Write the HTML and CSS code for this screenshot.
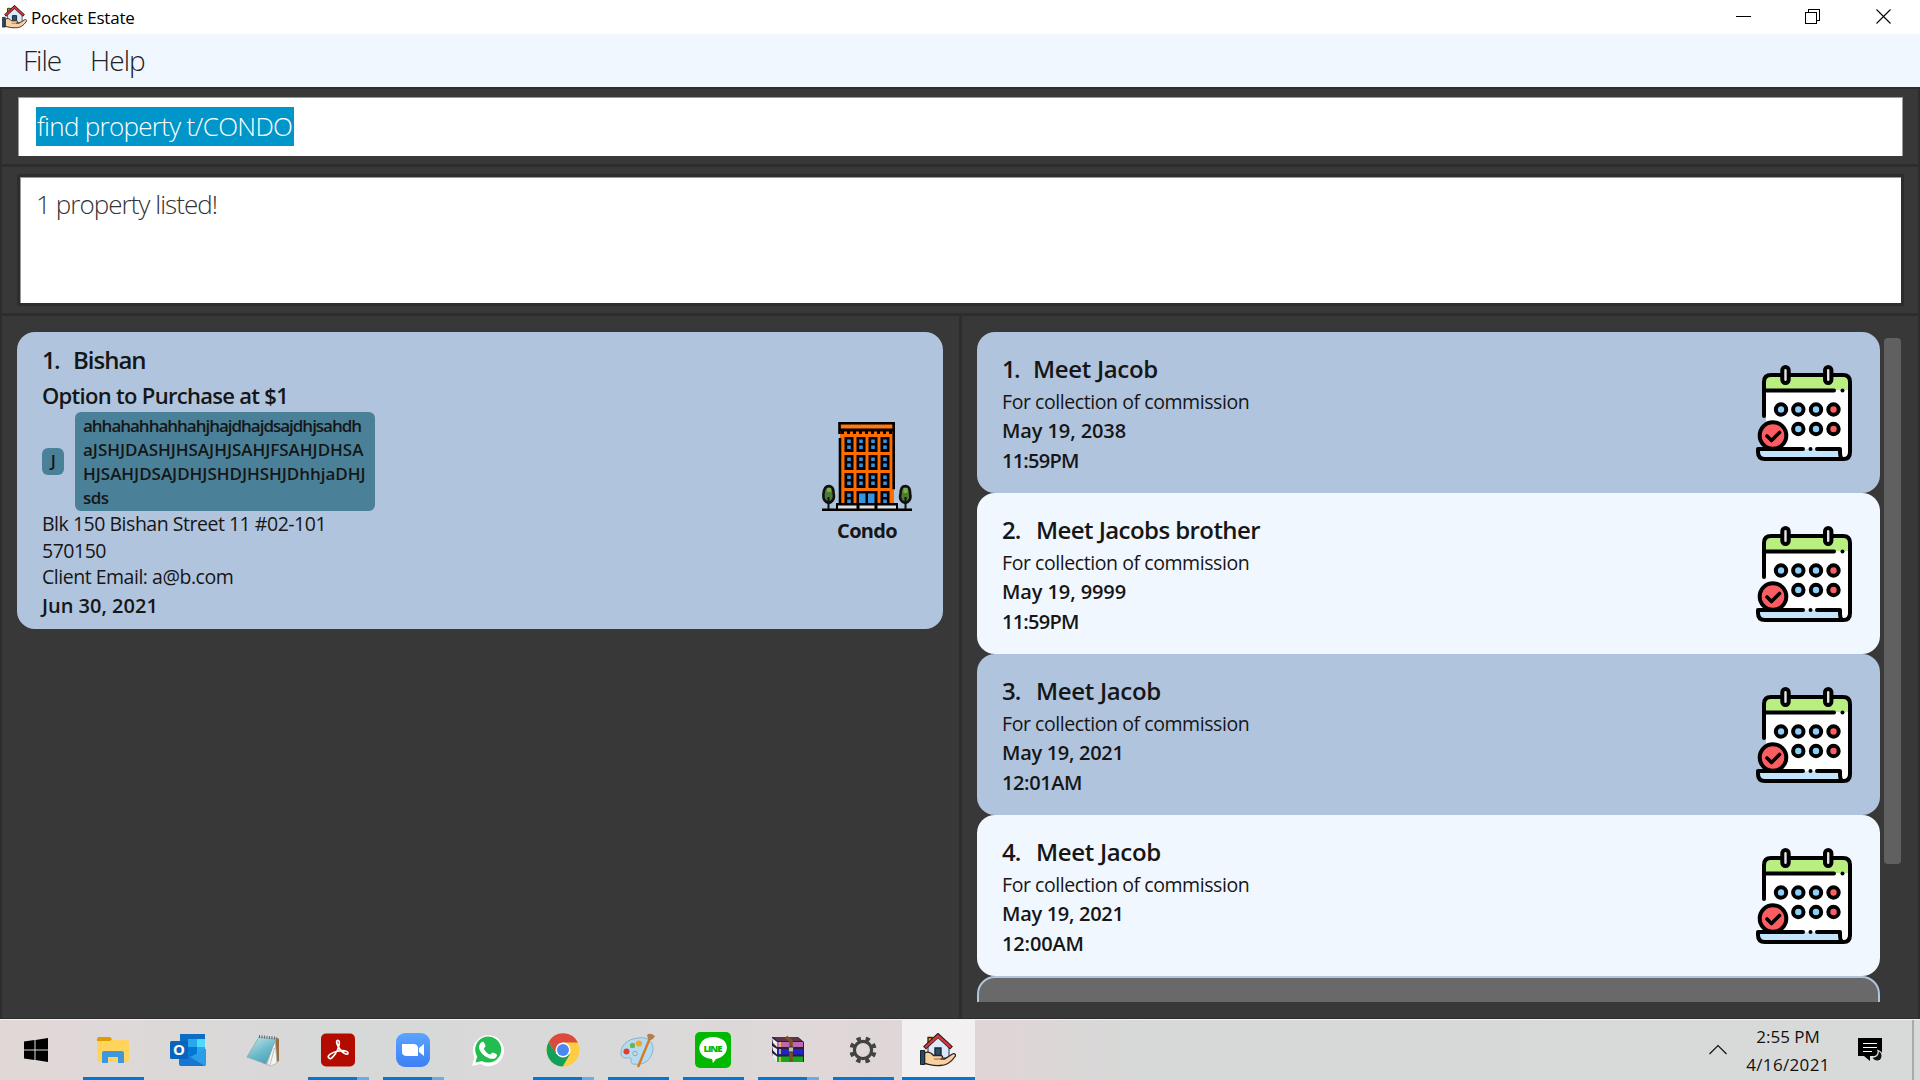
FILE: index.html
```html
<!DOCTYPE html>
<html lang="en">
<head>
<meta charset="utf-8">
<title>Pocket Estate</title>
<link rel="stylesheet" href="styles.css">
</head>
<body>
<svg class="defs" width="0" height="0">
  <symbol id="house" viewBox="0 0 36 34">
    <path d="M8 4.500h4v6H8z" fill="#f90" stroke="#2b2420" stroke-width="1.300"/>
    <path d="M8 13L18 4l11 9v12H8z" fill="#dbe9fa" stroke="#233040" stroke-width="1"/>
    <path d="M15 15h6v10h-6z" fill="#2d5068" stroke="#182733" stroke-width="1.400"/>
    <path d="M4.500 15L18 2.500l13.500 12.500" fill="none" stroke="#291818" stroke-width="4.200"/>
    <path d="M5.200 14.300L18 2.900l12.800 11.400" fill="none" stroke="#d63840" stroke-width="2.400"/>
    <path d="M4.500 20c4-2 7 0 9 2.500h7c3 0 2.500 3.500 0 3.500h4l8-5c2.500-1 4 1 2.500 2.500-4 6-9 9-15 9-6 .5-10-1-15.500-2z" fill="#fbd0a0" stroke="#2b2420" stroke-width="1.300"/>
    <path d="M14 26h9" stroke="#8a684c" stroke-width="1"/>
    <path d="M.5 17.500h4.200v14H.5z" fill="#264a60" stroke="#14222c"/>
  </symbol>
  <symbol id="calendar" viewBox="0 0 96 96">
    <path d="M8 50V17q0-7 7-7h72q7 0 7 7v70q0 7-6 7H10V50z" fill="#fff"/>
    <path d="M9 25v-8q0-7 7-7h71q7 0 7 7v8z" fill="#b9ef80"/>
    <path d="M2 84h82v10H8q-6-1-6-10z" fill="#c3e5fb"/>
    <path d="M8 51V17q0-7 7-7h72q7 0 7 7v70q0 7-6.500 7Q84 94 84 87v-3H61M47 84H2v3q0 7 7 7h79M9 25.500h69" fill="none" stroke="#000" stroke-width="4" stroke-linejoin="round" stroke-linecap="round"/>
    <circle cx="86.500" cy="25.500" r="2"/><circle cx="54.500" cy="84" r="2"/>
    <g fill="#e5e5e5" stroke="#000" stroke-width="4"><rect x="26.300" y="2" width="6.400" height="16" rx="3.200"/><rect x="69" y="2" width="6.400" height="16" rx="3.200"/></g>
    <g fill="#8dcffb" stroke="#000" stroke-width="4"><circle cx="25" cy="44.500" r="5.200"/><circle cx="42.300" cy="44.500" r="5.200"/><circle cx="60" cy="44.500" r="5.200"/><circle cx="42.300" cy="64" r="5.200"/><circle cx="60" cy="64" r="5.200"/></g>
    <g fill="#fc5d60" stroke="#000" stroke-width="4"><circle cx="77.500" cy="44.500" r="5.200"/><circle cx="77.500" cy="64" r="5.200"/><circle cx="17" cy="70.500" r="13.300"/></g>
    <path d="M11 71l4.500 4.500 8-8" fill="none" stroke="#000" stroke-width="3.600" stroke-linecap="round" stroke-linejoin="round"/>
  </symbol>
</svg>

<header class="titlebar">
  <svg class="app-icon" width="25" height="24"><use href="#house"/></svg>
  <span class="app-name">Pocket Estate</span>
  <div class="window-controls">
    <svg width="15" height="15" shape-rendering="crispEdges"><path d="M0 7.500h15" stroke="#000"/></svg>
    <svg class="restore" width="15" height="15" shape-rendering="crispEdges"><path d="M.5 3.500h11v11H.5zM3.500 3V.5h11v11H12" fill="none" stroke="#000"/></svg>
    <svg width="15" height="15"><path d="M.5.5l14 14M14.500.5l-14 14" stroke="#000" stroke-width="1.100"/></svg>
  </div>
</header>

<nav class="menubar"><span>File</span><span>Help</span></nav>

<section class="pane command-pane">
  <div class="command-box"><span class="selection">find property t/CONDO</span></div>
</section>
<section class="pane result-pane">
  <div class="result-box"><span class="result-text">1 property listed!</span></div>
</section>

<main class="lists">
  <section class="list property-list">
    <article class="property-card">
      <div class="property-info">
        <h2 class="card-title property-name"><span class="index">1.</span><span>Bishan</span></h2>
        <p class="option">Option to Purchase at $1</p>
        <div class="tags">
          <span class="tag tag-short">J</span>
          <span class="tag tag-long"><span class="tag-lower">ahhahahhahhahjhajdhajdsajdhjsahdh</span><br><span class="tag-upper">aJSHJDASHJHSAJHJSAHJFSAHJDHSA</span><br><span class="tag-upper">HJSAHJDSAJDHJSHDJHSHJDhhjaDHJ</span><br><span>sds</span></span>
        </div>
        <p class="detail">Blk 150 Bishan Street 11 #02-101</p>
        <p class="detail">570150</p>
        <p class="detail">Client Email: a@b.com</p>
        <p class="strong deadline">Jun 30, 2021</p>
      </div>
      <div class="property-type">
        <svg width="90" height="90" viewBox="0 0 90 90">
          <path d="M18 2h54v82H18z" fill="#ff6d00"/>
          <path d="M17.500 12V1.300h54.200v66M18 16v68" fill="none" stroke="#000" stroke-width="2.600"/>
          <path d="M17 8h55" stroke="#000" stroke-width="3"/>
          <path d="M19 4.500h51" stroke="#ff7a14" stroke-width="2.800"/>
          <path d="M19 10.500h53" stroke="#000" stroke-width="3" stroke-dasharray="3 3"/>
          <path d="M22.500 15h9v15h-9zM34.500 15h9v15h-9zM46.500 15h9v15h-9zM58.500 15h9v15h-9zM22.500 33h9v15h-9zM34.500 33h9v15h-9zM46.500 33h9v15h-9zM58.500 33h9v15h-9zM22.500 51h9v15h-9zM34.500 51h9v15h-9zM46.500 51h9v15h-9zM58.500 51h9v15h-9zM22.500 69h9v14h-9zM58.500 69h9v14h-9zM34.500 69h21v14h-21z"/>
          <path stroke="#3893df" stroke-width="3.600" stroke-dasharray="3.600 2.400" d="M27 17.500v10M39 17.500v10M51 17.500v10M63 17.500v10M27 35.500v10M39 35.500v10M51 35.500v10M63 35.500v10M27 53.500v10M39 53.500v10M51 53.500v10M63 53.500v10M27 71.500v10M63 71.500v10"/>
          <path d="M37 71.500h6.500V81H37zM46 71.500h6.500V81H46z" fill="#3893df"/>
          <path d="M14 81h62v7H14zM0 86.500h90v2.500H0z"/>
          <path d="M16 83.500h18.500v3H16zM37.500 83.500h15v3h-15zM55.500 83.500H74v3H55.500z" fill="#e0e0e0"/>
          <path d="M7 64q5 1 4.500 7 2 8-5 10-6-2-5-9Q2 64 7 64zM83.500 64q5 1 4.500 7 2 8-4.500 10-7-2-5-9 0-8 5-8z" fill="#4f7a36" stroke="#111" stroke-width="2.600"/>
          <path d="M7 66v4M83.500 66v5" stroke="#7cae45" stroke-width="4"/>
          <path d="M6.500 75v12M83.500 75v12" stroke="#111" stroke-width="2"/>
        </svg>
        <span class="type-name">Condo</span>
      </div>
    </article>
  </section>

  <section class="list appointment-list">
    <div class="appointments">
      <article class="appointment">
        <div><h2 class="card-title"><span class="index">1.</span><span>Meet Jacob</span></h2><p class="detail remark">For collection of commission</p><p class="strong date">May 19, 2038</p><p class="strong time narrow">11:59PM</p></div>
        <svg width="96" height="96"><use href="#calendar"/></svg>
      </article>
      <article class="appointment even">
        <div><h2 class="card-title long-title"><span class="index wide">2.</span><span>Meet Jacobs brother</span></h2><p class="detail remark">For collection of commission</p><p class="strong date">May 19, 9999</p><p class="strong time narrow">11:59PM</p></div>
        <svg width="96" height="96"><use href="#calendar"/></svg>
      </article>
      <article class="appointment">
        <div><h2 class="card-title"><span class="index wide">3.</span><span>Meet Jacob</span></h2><p class="detail remark">For collection of commission</p><p class="strong date-mid">May 19, 2021</p><p class="strong time">12:01AM</p></div>
        <svg width="96" height="96"><use href="#calendar"/></svg>
      </article>
      <article class="appointment even">
        <div><h2 class="card-title"><span class="index wide">4.</span><span>Meet Jacob</span></h2><p class="detail remark">For collection of commission</p><p class="strong date-mid">May 19, 2021</p><p class="strong time wide-time">12:00AM</p></div>
        <svg width="96" height="96"><use href="#calendar"/></svg>
      </article>
      <div class="appointment-partial"></div>
    </div>
    <div class="scrollbar"></div>
  </section>
</main>

<footer class="taskbar">
  <div class="task start"><svg width="24" height="24"><path d="M0 3.500l10.500-1.400v9.400H0zM11.500 2L24 0v11.500H11.500zM0 12.500h10.500v9.400L0 20.500zM11.500 12.500H24V24l-12.500-2z"/></svg></div>
  <div class="task open"><svg width="34" height="28" viewBox="0 0 34 28"><path d="M1 3q0-2 2-2h11l3 3h14q2 0 2 2v18q0 2-2 2H3q-2 0-2-2z" fill="#ffd45c"/><path d="M1 5V3q0-2 2-2h11l2 2-2 2z" fill="#dd9d00"/><path d="M6 27V17q0-2 2-2h18q2 0 2 2v10h-6v-6H12v6z" fill="#3c97dd"/></svg></div>
  <div class="task"><svg width="36" height="34" viewBox="0 0 36 34"><path d="M10 1h25v24H10z" fill="#0a6fc4"/><path d="M18 6h9v8h-9z" fill="#28a8ea"/><path d="M27 6h8v8h-8z" fill="#50d9ff"/><path d="M18 14h9v8h-9z" fill="#0078d4"/><path d="M27 14h8v4l-8 5z" fill="#28a8ea"/><path d="M9 18l13 6 14-8v15q0 2-2 2H11q-2 0-2-2z" fill="#1676d2"/><path d="M36 16v15q0 2-2 1.500L20 24z" fill="#2b9ce8"/><rect y="8" width="18" height="18" rx="1.500" fill="#0865be"/><text x="9" y="22" text-anchor="middle" class="outlook-letter">O</text></svg></div>
  <div class="task"><svg width="34" height="33" viewBox="0 0 34 33"><defs><linearGradient id="padTeal" x2=".6" y2="1"><stop stop-color="#cfe8ea"/><stop offset=".6" stop-color="#6fbccb"/><stop offset="1" stop-color="#4ea3b6"/></linearGradient></defs><path d="M30 3l3 2v22l-7 4z" fill="#9b6d3e"/><path d="M29 4l2 25-6 3-8-3z" fill="#f4f4f0" stroke="#a7b1b3" stroke-width=".8"/><path d="M26 14l-5 17M28.500 14L24 31" stroke="#a9b4b8" stroke-width=".8"/><path d="M13 3l17 2-10 25L1 23z" fill="url(#padTeal)" stroke="#7ba3ad" stroke-width=".7"/><path d="M13 2.500l17 1.500" stroke="#667" stroke-width="3" stroke-dasharray="1 1.500"/></svg></div>
  <div class="task open multi"><svg width="34" height="34" viewBox="0 0 34 34"><rect y=".5" width="34" height="33" rx="5" fill="#b30b00"/><path d="M8 25c-3-2 3-6 10-7s9 1 9 2c0 3-6 0-9-5S15 7 17.200 7.500s1 8-3 13.500S9 26 8 25z" fill="none" stroke="#fff" stroke-width="1.700"/></svg></div>
  <div class="task open multi"><svg width="34" height="34" viewBox="0 0 34 34"><defs><linearGradient id="zoomBlue" x2="0" y2="1"><stop stop-color="#5ba4ff"/><stop offset="1" stop-color="#3c80f6"/></linearGradient></defs><rect width="34" height="34" rx="9" fill="url(#zoomBlue)"/><path d="M6 11h11q5 0 5 4v8H11q-5 0-5-4zM23 15l5-4v12l-5-4z" fill="#fff"/></svg></div>
  <div class="task"><svg width="33" height="33" viewBox="0 0 33 33"><path d="M1 32l2.500-8.500A15.500 15.500 0 1 1 9.500 30z" fill="#fff"/><path d="M4.500 28.500l1.700-6A13 13 0 1 1 11 27z" fill="#21bd4e"/><path d="M11 8c2-1 2.500 1 3.500 4 .3 1-2 2-1.500 3 1.500 3 3.500 4.500 6 5.500 1 0 2-2.500 3-2s4 1.500 4 2.500c0 4-5 4.500-8 3.300-5-2-8-5-9.700-9C7.500 13 8.500 9 11 8z" fill="#fff"/></svg></div>
  <div class="task open multi"><svg width="34" height="34" viewBox="0 0 34 34"><circle cx="17" cy="17" r="16.500" fill="#ffcd42"/><path d="M2.700 9A16.500 16.500 0 0 1 32 9.500H17l-7.500 11z" fill="#db4a3e"/><path d="M2.700 9a16.500 16.500 0 0 0 14 24.500L24 21H10z" fill="#12a05b"/><circle cx="17" cy="17" r="7.500" fill="#fff"/><circle cx="17" cy="17" r="6" fill="#4a89f4"/></svg></div>
  <div class="task open"><svg width="36" height="36" viewBox="0 0 36 36"><path d="M18 6C31 4 36 14 31 24c-4 8-12 9-18 8-4-1 0-5-3-6-4-1-6 2-9-3C0 14 7 7 18 6z" fill="#b4dbf0" stroke="#8ab3ca"/><circle cx="6.500" cy="19.500" r="3" fill="#e23c2d"/><rect x="10" y="11" width="5" height="5" rx="1.500" fill="#6cb455"/><circle cx="19" cy="11.500" r="3" fill="#f9a51e"/><circle cx="15" cy="21.500" r="2.200" fill="#dad9d8" stroke="#7caac3"/><path d="M30 6L18 35" stroke="#d87a20" stroke-width="2.400"/><path d="M27 3q3-3 8 1-2 4-5 4l-2-1z" fill="#ad814f"/></svg></div>
  <div class="task open"><svg width="36" height="36" viewBox="0 0 36 36"><rect width="36" height="36" rx="5" fill="#00b900"/><path d="M18 5c18 0 18 19 3 22l-3 4c-1-1 0-3-1-4C-1 26 1 5 18 5z" fill="#fff"/><text x="18" y="20" text-anchor="middle" textLength="19" class="line-label">LINE</text></svg></div>
  <div class="task open multi"><svg width="34" height="28" viewBox="0 0 34 28"><path d="M1 1h26l6 5v20H8l-7-7z" fill="#292033"/><path d="M2 1h24l5 4H7z" fill="#5d3450"/><path d="M6 6h26v5H6z" fill="#c067b2"/><path d="M6 13h26v5.500H6z" fill="#2121d4"/><path d="M6 20.500h26V26H6z" fill="#16a51b"/><path d="M1 2l5 4v5L2 7zM1 10l5 3v5.500l-4-4zM1 17l5 3.500V26l-4-5z" fill="#eee"/><path d="M9 6v5M9 13v5M9 21v5" stroke="#ead344" stroke-width="1.500"/><path d="M15 1l5 4v21" fill="none" stroke="#795125" stroke-width="3.500"/><rect x="17.500" y="11" width="5" height="5" rx="1" fill="#bbb" stroke="#333"/></svg></div>
  <div class="task open"><svg width="28" height="28" viewBox="0 0 28 28"><circle cx="14" cy="14" r="8.600" fill="none" stroke="#424242" stroke-width="3.200"/><circle cx="14" cy="14" r="11.600" fill="none" stroke="#424242" stroke-width="4" stroke-dasharray="4.300 4.811" transform="rotate(11.500 14 14)"/></svg></div>
  <div class="task open active"><svg width="36" height="34"><use href="#house"/></svg></div>
  <div class="tray">
    <svg class="chevron" width="18" height="11"><path d="M.5 10L9 1.500l8.500 8.500" fill="none" stroke="#111" stroke-width="1.200"/></svg>
    <div class="clock"><span>2:55 PM</span><span class="clock-date">4/16/2021</span></div>
    <svg class="notice" width="25" height="24" viewBox="0 0 25 24"><path d="M0 0h24v18H12v5l-6-5H0z"/><path d="M5 5.500h14M5 9.500h14M5 13.500h9" stroke="#fff"/><path d="M20 12.500c1 4-2 7-6.500 6.500 2 5.500 9.500 5.500 10.500 0 .5-3-1-5.500-4-6.500z" fill="#111" stroke="#ddd" stroke-width="1.300"/></svg>
    <span class="show-desktop"></span>
  </div>
</footer>
</body>
</html>
```
FILE: styles.css
```css
* { box-sizing: border-box; }
body {
  margin: 0;
  width: 1920px;
  height: 1080px;
  overflow: hidden;
  display: flex;
  flex-direction: column;
  background: #383838;
  font-family: "Open Sans", "Noto Sans", sans-serif;
  color: #161616;
  white-space: nowrap;
}
h2, p { margin: 0; }
svg { display: block; flex: none; }
.defs { position: absolute; }

/* Title bar and menu */
.titlebar { height: 34px; flex: none; display: flex; align-items: center; padding: 0 12px 0 2px; background: #fff; }
.app-name { margin-left: 4px; padding-top: 1px; font-size: 17px; letter-spacing: -0.2px; color: #000; }
.window-controls { display: flex; gap: 54px; margin-left: auto; padding: 0 17px 1px 0; }
.restore { margin-right: 2px; }
.menubar { height: 53px; flex: none; display: flex; align-items: center; gap: 29px; padding: 0 23px 2px; background: #f0f7ff; font-size: 28px; font-weight: 300; letter-spacing: -1px; color: #222; }

/* Framed panes */
.pane { flex: none; border: 2px solid #2d2d2d; border-bottom-width: 1px; padding: 0 16px; }
.command-pane { height: 78px; padding-top: 8px; }
.command-box { height: 59px; width: 1885px; padding: 9px 17px; background: #fff; border: solid #999; border-width: 1px 1px 0; }
.selection { display: inline-block; height: 39px; width: 258px; line-height: 38px; padding-left: 1px; background: #0096c9; color: #fff; font-size: 26px; font-weight: 300; letter-spacing: -0.7px; }
.result-pane { height: 149px; padding: 7px 15px; }
.result-box { height: 132px; width: 1887px; padding: 8px 16px; background: #fff; border: 3px solid #2d2d2d; box-shadow: inset 0 1px #999, inset 1px 0 #999; }
.result-text { display: block; line-height: 38px; font-size: 26px; font-weight: 300; letter-spacing: -0.95px; color: #333; }

.lists { flex: 1; min-height: 0; display: flex; }
.list { border: 2px solid #2d2d2d; border-bottom-width: 1px; padding-top: 16px; }
.property-list { width: 960px; padding-left: 15px; border-right-width: 1px; }
.appointment-list { width: 960px; padding-left: 15px; display: flex; gap: 4px; }

/* Cards */
.property-card { display: flex; justify-content: space-between; width: 926px; height: 297px; padding: 11px 31px 0 25px; border-radius: 18px; background: #b0c4de; }
.card-title { display: flex; height: 34px; line-height: 34px; font-size: 24px; font-weight: 600; letter-spacing: -0.32px; }
.property-name { letter-spacing: -1px; }
.long-title { letter-spacing: -0.57px; }
.index { width: 31px; letter-spacing: -1.8px; }
.index.wide { width: 34px; letter-spacing: -1px; }
.option { margin-top: 1px; line-height: 34px; font-size: 22px; font-weight: 600; letter-spacing: -0.7px; }
.tags { display: flex; align-items: center; gap: 11px; }
.tag { border-radius: 6px; background: #4a8199; font-size: 17px; line-height: 24px; font-weight: 600; letter-spacing: -0.5px; }
.tag-short { width: 22px; height: 27px; padding-top: 1px; text-align: center; }
.tag-long { width: 300px; height: 99px; padding: 2px 8px; }
.tag-lower { letter-spacing: -1.02px; }
.tag-upper { letter-spacing: -0.03px; }
.detail { font-size: 19.5px; line-height: 26.5px; letter-spacing: -0.48px; }
.strong { font-size: 20px; line-height: 29px; font-weight: 600; letter-spacing: -0.4px; }
.deadline { letter-spacing: 0; }
.date { letter-spacing: -0.1px; }
.date-mid { letter-spacing: -0.3px; }
.property-type { display: flex; flex-direction: column; align-items: center; padding-top: 79px; }
.type-name { margin-top: 4px; font-size: 20px; line-height: 30px; font-weight: 700; letter-spacing: -0.7px; }

.appointments { width: 903px; height: 670px; overflow: hidden; }
.appointment { display: flex; justify-content: space-between; height: 161px; padding: 20px 28px 0 25px; border-radius: 18px; background: #b0c4de; }
.appointment.even { background: #f0f7ff; }
.appointment svg { margin-top: 13px; }
.remark { height: 30px; line-height: 32px; letter-spacing: -0.43px; }
.time { line-height: 32px; }
.narrow { letter-spacing: -0.75px; }
.wide-time { letter-spacing: -0.15px; }
.appointment-partial { height: 161px; border: 2px solid #b0c4de; border-radius: 18px; background: #696969; }
.scrollbar { width: 17px; height: 526px; margin-top: 6px; border-radius: 4px; background: #606060; }

/* Taskbar */
.taskbar { height: 61px; flex: none; display: flex; border-top: 1px solid #f5f0f0; background: linear-gradient(90deg, #e1d7d7 0, #dfd8d8 100px, #d7d8d8 330px, #d9d9d9 600px, #dfd8d8 800px, #e0d5d6 1000px, #d6d9d8 1140px, #d8dad9 1920px); }
.task { width: 75px; display: flex; align-items: center; justify-content: center; border-bottom: 3px solid transparent; padding: 3px 2px 0 0; }
.task.start { width: 76px; padding-right: 4px; }
.task.open { background: linear-gradient(#0078d7, #0078d7) 7px 100% / 61px 3px no-repeat border-box; }
.task.open.multi { background: linear-gradient(90deg, #0078d7 49px, #66aee5 49px) 7px 100% / 61px 3px no-repeat border-box; }
.task.open.active { width: 73px; margin-left: 1px; padding-right: 1px; background: linear-gradient(#0078d7, #0078d7) 0 100% / 100% 3px no-repeat border-box, #f2f0f0; }
.outlook-letter { font: 700 15px "Open Sans", sans-serif; fill: #fff; }
.line-label { font: 800 9.5px "Open Sans", sans-serif; fill: #00b900; }
.tray { display: flex; margin-left: auto; }
.chevron { margin-top: 24px; }
.clock { width: 122px; display: flex; flex-direction: column; align-items: center; padding-top: 3px; font-size: 17px; line-height: 28px; color: #111; }
.clock-date { letter-spacing: 0.35px; }
.notice { margin: 18px 29px 0 9px; }
.show-desktop { width: 8px; border-left: 2px solid #aaa; }
```
